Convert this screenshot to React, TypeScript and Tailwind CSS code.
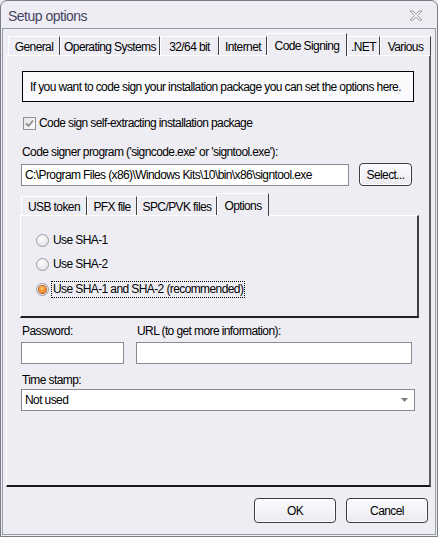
import React from "react";

const F = "[font-family:'Liberation_Sans',sans-serif] tracking-[-0.6px] whitespace-nowrap";

function Tab({ label, w, selected }: { label: string; w: number; selected?: boolean }) {
  if (selected) {
    return (
      <div
        className="relative z-10 -mb-px flex h-[23px] items-start justify-center border-l border-t border-white border-r border-r-[#404040] bg-[#eeedf4] pt-[3px] text-[12px] text-black"
        style={{ width: w }}
      >
        {label}
      </div>
    );
  }
  return (
    <div
      className="flex h-[19px] items-start justify-center border-t border-l border-white border-r border-r-[#404040] pt-[1px] text-[12px] text-black"
      style={{ width: w }}
    >
      {label}
    </div>
  );
}

function Radio({ checked, label, focus }: { checked?: boolean; label: string; focus?: boolean }) {
  return (
    <div className="flex h-[17px] items-center">
      <div className="flex h-[13px] w-[13px] items-center justify-center rounded-full border border-[#9a9ca3] bg-[radial-gradient(circle_at_40%_35%,#ffffff,#dcdce0)]">
        {checked && (
          <div className="h-[7px] w-[7px] rounded-full bg-[radial-gradient(circle_at_40%_35%,#ffc860,#e0600c)] shadow-[0_0_0_1px_#b8520f]" />
        )}
      </div>
      <span
        className={
          "ml-[3px] px-[1px] text-[12px] leading-[15px] " +
          (focus ? "outline outline-1 outline-dotted outline-black" : "")
        }
      >
        {label}
      </span>
    </div>
  );
}

function Button({ label, w, h }: { label: string; w: number; h: number }) {
  return (
    <div
      className="flex items-center justify-center rounded-[4px] border border-[#3d3d3d] bg-[linear-gradient(#fbfbfd,#eceaf1)] text-[12px] text-black shadow-[inset_0_0_0_1px_#ffffff]"
      style={{ width: w, height: h }}
    >
      {label}
    </div>
  );
}

export default function App() {
  return (
    <div className={"h-[537px] w-[438px] bg-[#eeedf4] " + F}>
      <div className="flex h-full w-full flex-col rounded-t-[7px] border border-[#767c85] bg-[#eeedf4]">
        {/* title bar */}
        <div className="flex h-[27px] items-center justify-between pl-[7px] pr-[14px] pt-[4px]">
          <span className="text-[14px] text-[#44465f] tracking-[-0.5px]">
            Setup options
          </span>
          <svg width="14" height="11" viewBox="0 0 14 11" className="-mt-[2px]">
            <path
              d="M1 1 L4 1 L7 4 L10 1 L13 1 L8.5 5.5 L13 10 L10 10 L7 7 L4 10 L1 10 L5.5 5.5 Z"
              fill="#f4f4f7"
              stroke="#9a9ea6"
              strokeWidth="1"
              strokeLinejoin="round"
            />
          </svg>
        </div>
        {/* client area */}
        <div className="mx-[1px] mb-[1px] flex flex-1 flex-col border border-[#979da5] pl-[3px] pr-[2px]">
          {/* tabs */}
          <div className="mt-[4px] flex h-[22px] items-end pl-[2px]">
            <Tab label="General" w={52} />
            <Tab label="Operating Systems" w={100} />
            <Tab label="32/64 bit" w={59} />
            <Tab label="Internet" w={48} />
            <Tab label="Code Signing" w={80} selected />
            <Tab label=".NET" w={33} />
            <Tab label="Various" w={51} />
          </div>
          {/* panel */}
          <div className="flex h-[432px] w-[425px] flex-col border-l border-t border-white border-r-2 border-r-[#5a5a5a] border-b-2 border-b-[#1a1a1a] pl-[14px] text-[12px] text-black">
            <div className="ml-[1px] mt-[15px] flex h-[31px] w-[392px] items-center border border-black bg-[#fafafd] pl-[7px]">
              If you want to code sign your installation package you can set the options here.
            </div>
            <div className="ml-[2px] mt-[15px] flex h-[13px] items-center">
              <div className="flex h-[13px] w-[13px] items-center justify-center border border-[#8f9198] bg-[linear-gradient(135deg,#e4e4e8,#fbfbfc)]">
                <svg width="9" height="9" viewBox="0 0 9 9">
                  <path d="M1 4.5 L3.5 7 L8 1.5" fill="none" stroke="#8c8c8c" strokeWidth="1.8" />
                </svg>
              </div>
              <span className="ml-[3px] leading-[15px]">Code sign self-extracting installation package</span>
            </div>
            <div className="ml-[1px] mt-[15px] leading-[14px]">
              Code signer program ('signcode.exe' or 'signtool.exe'):
            </div>
            <div className="mt-[4px] flex h-[23px] items-start">
              <div className="mt-[1px] flex h-[22px] w-[328px] items-center border border-[#878b94] bg-white pl-[3px]">
                C:\Program Files (x86)\Windows Kits\10\bin\x86\signtool.exe
              </div>
              <div className="ml-[10px]">
                <Button label="Select..." w={53} h={23} />
              </div>
            </div>
            {/* inner tabs */}
            <div className="mt-[9px] flex h-[20px] items-end">
              <Tab label="USB token" w={66} />
              <Tab label="PFX file" w={50} />
              <Tab label="SPC/PVK files" w={80} />
              <Tab label="Options" w={52} selected />
            </div>
            <div className="-ml-[1px] flex h-[103px] w-[399px] flex-col border-l border-t border-white border-r-2 border-r-[#404040] border-b-2 border-b-[#202020] pl-[15px] pt-[16px]">
              <Radio label="Use SHA-1" />
              <div className="mt-[7px]">
                <Radio label="Use SHA-2" />
              </div>
              <div className="mt-[8px]">
                <Radio label="Use SHA-1 and SHA-2 (recommended)" checked focus />
              </div>
            </div>
            <div className="mt-[6px] flex leading-[14px]">
              <span className="ml-[1px] w-[115px]">Password:</span>
              <span>URL (to get more information):</span>
            </div>
            <div className="mt-[4px] flex">
              <div className="h-[22px] w-[103px] border border-[#878b94] bg-white" />
              <div className="ml-[12px] h-[22px] w-[276px] border border-[#878b94] bg-white" />
            </div>
            <div className="ml-[1px] mt-[9px] leading-[14px]">Time stamp:</div>
            <div className="mt-[2px] flex h-[22px] w-[394px] items-center justify-between border border-[#878b94] bg-white pl-[3px] pr-[6px]">
              <span>Not used</span>
              <svg width="7" height="4" viewBox="0 0 7 4">
                <path d="M0 0 L7 0 L3.5 4 Z" fill="#7a7a7a" />
              </svg>
            </div>
          </div>
          {/* buttons */}
          <div className="mt-[11px] flex justify-end gap-[10px] pr-[5px] text-[12px]">
            <Button label="OK" w={82} h={25} />
            <Button label="Cancel" w={82} h={25} />
          </div>
        </div>
      </div>
    </div>
  );
}
